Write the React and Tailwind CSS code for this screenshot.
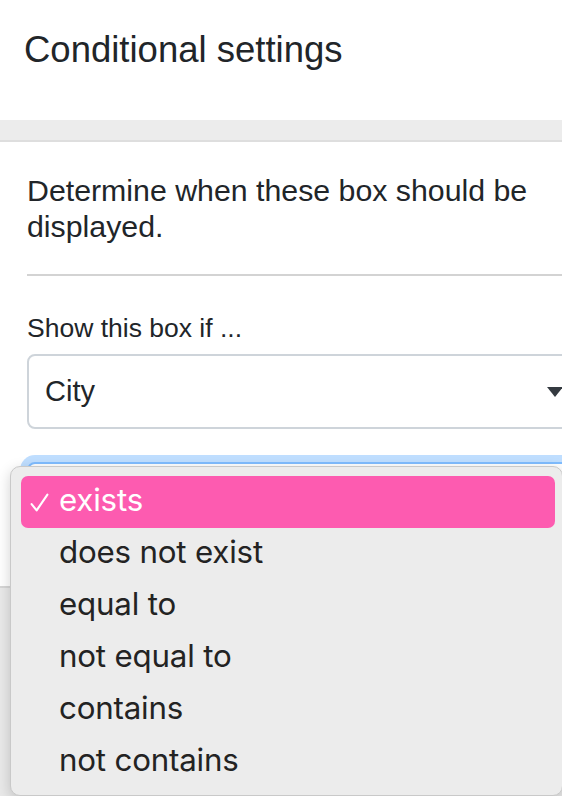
import React from "react";

const items = ["exists", "does not exist", "equal to", "not equal to", "contains", "not contains"];

export default function App() {
  return (
    <div className="relative w-[562px] h-[796px] overflow-hidden bg-white text-[#212529]" style={{ fontFamily: '"Liberation Sans", Arial, sans-serif' }}>
      <div className="h-[120px] pl-[24px] pt-[28px]">
        <h1 className="text-[36.5px] leading-[44px] font-normal">Conditional settings</h1>
      </div>
      <div className="h-[22px] bg-[#ececec] border-b-2 border-[#dedede]" />
      <div className="pl-[27px] w-[620px]">
        <p className="mt-[31px] text-[30.3px] leading-[36px] w-[520px]">Determine when these box should be displayed.</p>
        <div className="mt-[29px] h-[2px] bg-[#d3d3d3]" />
        <div className="mt-[36px] text-[26.5px] leading-[32px]">Show this box if ...</div>
        <div className="mt-[10px] w-[563px] h-[75px] rounded-[8px] border-2 border-[#ced4da] bg-white flex items-center justify-between pl-[16px] pr-[25px]">
          <span className="text-[29px]">City</span>
          <svg width="16" height="10" viewBox="0 0 16 10"><path d="M0 0 L16 0 L8 10 Z" fill="#343a40" /></svg>
        </div>
        <div className="mt-[33px] w-[563px] h-[75px] rounded-[8px] border-2 border-[#80bdff] bg-white shadow-[0_0_0_7px_rgba(0,123,255,0.25)]" />
      </div>
      <div className="mt-[49px] h-[300px] border-t-2 border-[#d6d6d6] bg-[#e9e9e9]" />

      <div
        className="absolute left-[10px] top-[466px] w-[553px] h-[330px] rounded-[10px] border border-[#c9c9c9] bg-[#ececec] shadow-[0_4px_14px_rgba(0,0,0,0.18)] pt-[9px] pl-[10px]"
        style={{ fontFamily: 'Inter, "Noto Sans", sans-serif' }}
      >
        {items.map((it, i) => (
          <div
            key={it}
            className={
              i === 0
                ? "w-[534px] h-[52px] rounded-[7px] bg-[#fd5bb0] text-white flex items-center pb-[3px]"
                : "w-[534px] h-[52px] text-[#232323] flex items-center pb-[3px]"
            }
          >
            <span className="w-[38px] flex justify-start pl-[9px] pt-[4px]">
              {i === 0 && (
                <svg width="19" height="19" viewBox="0 0 18 18">
                  <path d="M1.5 10.5 L6.3 16.5 L16.5 1.5" fill="none" stroke="white" strokeWidth="2" strokeLinecap="round" strokeLinejoin="round" />
                </svg>
              )}
            </span>
            <span className="text-[31.3px] leading-none tracking-[-0.2px]">{it}</span>
          </div>
        ))}
      </div>
    </div>
  );
}
